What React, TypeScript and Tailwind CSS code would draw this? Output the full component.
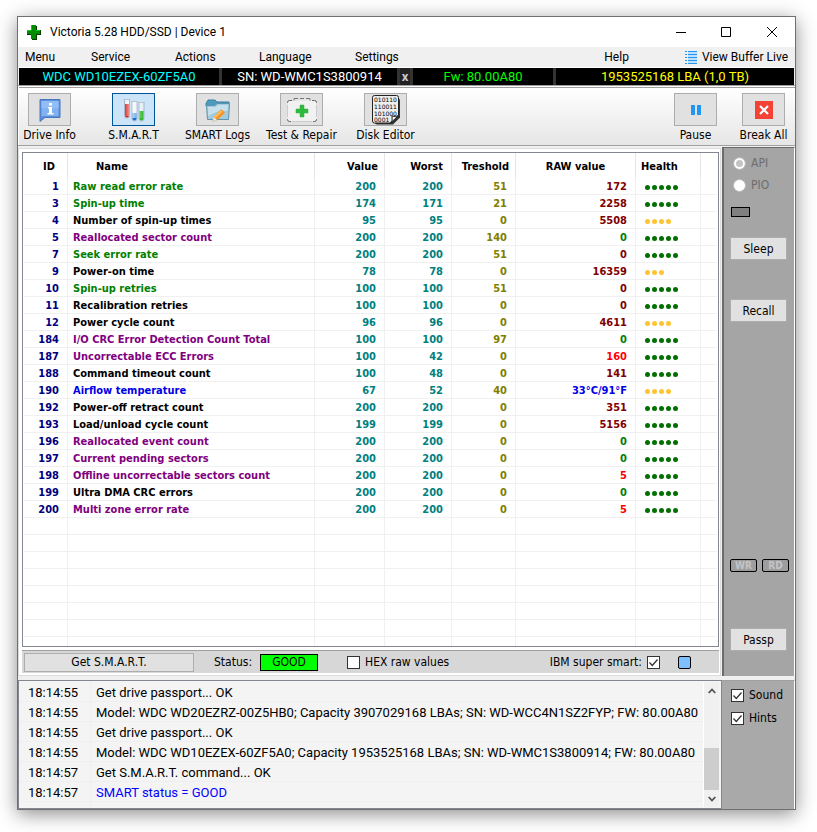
import { useState } from 'react';
import type { ReactNode } from 'react';

interface SmartAttribute {
  id: number;
  name: string;
  nameColor: string;
  value: number;
  worst: number;
  treshold: number;
  raw: string;
  rawColor: string;
  health: number;
}

interface LogEntry {
  time: string;
  message: string;
  color?: string;
}

const GREEN = 'text-[#008000]';
const BLACK = 'text-black';
const PURPLE = 'text-[#800080]';
const BLUE = 'text-[#0000e6]';
const MAROON = 'text-[#800000]';
const RED = 'text-[#ff0000]';

const row = (
  id: number,
  name: string,
  nameColor: string,
  value: number,
  worst: number,
  treshold: number,
  raw: string,
  rawColor: string,
  health: number
): SmartAttribute => ({ id, name, nameColor, value, worst, treshold, raw, rawColor, health });

const attributes: SmartAttribute[] = [
  row(1, 'Raw read error rate', GREEN, 200, 200, 51, '172', MAROON, 5),
  row(3, 'Spin-up time', GREEN, 174, 171, 21, '2258', MAROON, 5),
  row(4, 'Number of spin-up times', BLACK, 95, 95, 0, '5508', MAROON, 4),
  row(5, 'Reallocated sector count', PURPLE, 200, 200, 140, '0', GREEN, 5),
  row(7, 'Seek error rate', GREEN, 200, 200, 51, '0', MAROON, 5),
  row(9, 'Power-on time', BLACK, 78, 78, 0, '16359', MAROON, 3),
  row(10, 'Spin-up retries', GREEN, 100, 100, 51, '0', MAROON, 5),
  row(11, 'Recalibration retries', BLACK, 100, 100, 0, '0', MAROON, 5),
  row(12, 'Power cycle count', BLACK, 96, 96, 0, '4611', MAROON, 4),
  row(184, 'I/O CRC Error Detection Count Total', PURPLE, 100, 100, 97, '0', GREEN, 5),
  row(187, 'Uncorrectable ECC Errors', PURPLE, 100, 42, 0, '160', RED, 5),
  row(188, 'Command timeout count', BLACK, 100, 48, 0, '141', MAROON, 5),
  row(190, 'Airflow temperature', BLUE, 67, 52, 40, '33°C/91°F', BLUE, 4),
  row(192, 'Power-off retract count', BLACK, 200, 200, 0, '351', MAROON, 5),
  row(193, 'Load/unload cycle count', BLACK, 199, 199, 0, '5156', MAROON, 5),
  row(196, 'Reallocated event count', PURPLE, 200, 200, 0, '0', GREEN, 5),
  row(197, 'Current pending sectors', PURPLE, 200, 200, 0, '0', GREEN, 5),
  row(198, 'Offline uncorrectable sectors count', PURPLE, 200, 200, 0, '5', RED, 5),
  row(199, 'Ultra DMA CRC errors', BLACK, 200, 200, 0, '0', GREEN, 5),
  row(200, 'Multi zone error rate', PURPLE, 200, 200, 0, '5', RED, 5),
];

const logEntries: LogEntry[] = [
  { time: '18:14:55', message: 'Get drive passport... OK' },
  {
    time: '18:14:55',
    message: 'Model: WDC WD20EZRZ-00Z5HB0; Capacity 3907029168 LBAs; SN: WD-WCC4N1SZ2FYP; FW: 80.00A80',
  },
  { time: '18:14:55', message: 'Get drive passport... OK' },
  {
    time: '18:14:55',
    message: 'Model: WDC WD10EZEX-60ZF5A0; Capacity 1953525168 LBAs; SN: WD-WMC1S3800914; FW: 80.00A80',
  },
  { time: '18:14:57', message: 'Get S.M.A.R.T. command... OK' },
  { time: '18:14:57', message: 'SMART status = GOOD', color: 'text-[#0000ff]' },
];

const DriveInfoIcon = () => (
  <svg width="24" height="24" viewBox="0 0 24 24">
    <path d="M2 1.500h20v18H7L2 23.500z" fill="#5b8edb" stroke="#4a78bf" />
    <path d="M3.500 3h17v15h-17z" fill="#82b1f2" />
    <path d="M3.500 3h17v7h-17z" fill="#93bdf6" />
    <path d="M11 5h3v2.500h-3zM10 9h4v6h1.500v1.500h-6V15H11v-4.500h-1z" fill="#fff" />
  </svg>
);

const TubesIcon = () => (
  <svg width="24" height="24" viewBox="0 0 24 24">
    <defs>
      <linearGradient id="tube" x1="0" x2="1" y1="0" y2="0">
        <stop offset="0" stopColor="#fff" stopOpacity=".1" />
        <stop offset=".35" stopColor="#fff" stopOpacity=".75" />
        <stop offset="1" stopColor="#fff" stopOpacity="0" />
      </linearGradient>
    </defs>
    <path d="M2.500 1.500h5v16a2.500 2.500 0 0 1-5 0z" fill="#e6eef7" stroke="#a9b7c8" />
    <path d="M3 6h4v11.500a2 2 0 0 1-4 0z" fill="#d8231c" />
    <path d="M10 3.500h5v17a2.500 2.500 0 0 1-5 0z" fill="#e6eef7" stroke="#a9b7c8" />
    <path d="M10.500 15h4v5.500a2 2 0 0 1-4 0z" fill="#1272dd" />
    <path d="M17 4.500h5v16a2.500 2.500 0 0 1-5 0z" fill="#e6eef7" stroke="#a9b7c8" />
    <path d="M17.500 13h4v7.500a2 2 0 0 1-4 0z" fill="#35b92f" />
    <path d="M3 2h4v16H3zM10.500 4h4v16h-4zM17.500 5h4v15h-4z" fill="url(#tube)" />
    <path d="M1.500 1.500h7M9 3.500h7M16 4.500h7" stroke="#b9c4d2" />
  </svg>
);

const LogsIcon = () => (
  <svg width="26" height="24" viewBox="0 0 26 24">
    <path d="M1 5.500 3 2h7l2 2h12v4H1z" fill="#4f9bbd" stroke="#3b7f9f" />
    <path d="M1.500 7.500H10l2-2h12.500l-1 16h-21z" fill="#a4cbdd" stroke="#5b95af" />
    <path d="M3 9h8l2-2h10l-.5 6C15 12 9 14 3.200 18z" fill="#c7e1ec" />
    <path d="m16.500 11.500 3.500 3.500-8 7-3.500-3.500z" fill="#f79420" transform="rotate(-4 14 16)" />
    <path d="m16 12.500 1.300 1.300-7.300 6.500-1.200-1.200z" fill="#ffc266" />
    <path d="m8.500 18.500 3.500 3.500-4.500 1.500z" fill="#f7ead2" stroke="#b5a78d" strokeWidth=".5" />
  </svg>
);

const RepairIcon = () => (
  <svg width="32" height="26" viewBox="0 0 32 26">
    <rect x="1.500" y="3.500" width="29" height="21" rx="3" fill="#f1f1f1" />
    <path
      d="M1.500 6V5.500q0-2 2-2H6M30.500 6V5.500q0-2-2-2H26M1.500 22v.5q0 2 2 2H5M30.500 22v.5q0 2-2 2H27"
      fill="none"
      stroke="#666"
    />
    <path d="M8 3.500V1.500h4M14 1.500h4M20 1.500h4v2" fill="none" stroke="#777" />
    <path d="M6 24.500h20M1.500 8v12M30.500 8v12" stroke="#ccc" />
    <path d="M14 8h4v4h4v4h-4v4h-4v-4h-4v-4h4z" fill="#2dbb3c" stroke="#39a846" strokeWidth=".5" />
  </svg>
);

const DiskEditorIcon = () => (
  <svg width="30" height="31" viewBox="0 0 30 31">
    <path d="M4 3h22q2 0 2 2v17l-7 7H5q-2 0-2-2V5z" transform="translate(1 1.500)" fill="#333" />
    <path d="M3.500 1.500h22q2 0 2 2v18L20 29H3.500q-2 0-2-2V3.500q0-2 2-2z" fill="#ededed" stroke="#222" />
    <g fontFamily="'DejaVu Sans', sans-serif" fontSize="6" fill="#000">
      <text x="3" y="8">010110</text>
      <text x="3" y="15">110011</text>
      <text x="3" y="22">101000</text>
      <text x="3" y="28">0001</text>
    </g>
    <path d="M27.500 21.500q-3 2-6.500.5 1 5-1.500 7z" fill="#fff" stroke="#222" />
  </svg>
);

const PauseIcon = () => (
  <svg width="10" height="10" viewBox="0 0 10 10" fill="#2196f3">
    <path d="M0 0h4v10H0zM6 0h4v10H6z" />
  </svg>
);

const BreakIcon = () => (
  <svg width="18" height="18" viewBox="0 0 18 18">
    <path d="M0 0h18v18H0z" fill="#f44336" />
    <path d="m5 5 8 8M13 5l-8 8" stroke="#fff" strokeWidth="2.200" />
  </svg>
);

const ListIcon = () => (
  <svg width="12" height="13" viewBox="0 0 12 13">
    <path d="M3 0h9v13H3z" fill="#bfe0fa" />
    <path
      d="M0 .5h2M0 3.500h2M0 6.500h2M0 9.500h2M0 12.500h2M3 .5h9M3 3.500h9M3 6.500h9M3 9.500h9M3 12.500h9"
      stroke="#2196f3"
    />
  </svg>
);

interface ToolButtonProps {
  label: string;
  icon: ReactNode;
  active?: boolean;
  onClick?: () => void;
}

const ToolButton = ({ label, icon, active, onClick }: ToolButtonProps) => (
  <button onClick={onClick} className="flex w-[43px] flex-col items-center gap-px whitespace-nowrap">
    <span
      className={`flex h-[33px] w-full items-center justify-center border ${
        active ? 'border-[#005499] bg-[#cce4f7]' : 'border-[#adadad] bg-[#e1e1e1]'
      }`}
    >
      {icon}
    </span>
    <span className="leading-4">{label}</span>
  </button>
);

interface CheckBoxProps {
  id: string;
  checked: boolean;
  onChange: (checked: boolean) => void;
}

const CheckBox = ({ id, checked, onChange }: CheckBoxProps) => (
  <span className="grid shrink-0">
    <input
      id={id}
      type="checkbox"
      checked={checked}
      onChange={(e) => onChange(e.target.checked)}
      className="peer col-start-1 row-start-1 size-[13px] appearance-none border border-[#333] bg-white"
    />
    <svg
      viewBox="0 0 13 13"
      className="pointer-events-none col-start-1 row-start-1 hidden size-[13px] peer-checked:block"
    >
      <path d="m2.500 6.500 2.800 3 5.200-6" fill="none" stroke="#333" strokeWidth="1.300" />
    </svg>
  </span>
);

const SideButton = ({ label, className = '' }: { label: string; className?: string }) => (
  <button className={`h-[23px] w-[57px] border border-[#adadad] bg-[#e1e1e1] ${className}`}>{label}</button>
);

const HealthDots = ({ level }: { level: number }) => (
  <span role="img" aria-label={`Health ${level} of 5`} className="flex gap-0.5">
    {Array.from({ length: level }, (_, i) => (
      <span key={i} className={`size-[5px] rounded-full ${level === 5 ? 'bg-[#007000]' : 'bg-[#ffc433]'}`} />
    ))}
  </span>
);

const TitleBar = () => (
  <div className="flex h-[30px] items-center bg-white pl-2 font-['Roboto',sans-serif] text-[12px]">
    <svg width="15" height="15" viewBox="0 0 15 15">
      <path d="M6 1h5v4h4v5h-4v5H6v-5H1V5h5z" fill="#003c00" />
      <path d="M5 0h5v5h4v4h-4v5H5V9H1V5h4z" fill="#008c00" />
      <path d="M1 5.500h4M10 5.500h4M5.500 0v5" stroke="#00d800" />
    </svg>
    <h1 className="ml-[9px] flex-1">Victoria 5.28 HDD/SSD | Device 1</h1>
    <button aria-label="Minimize" className="flex w-[45px] justify-center">
      <svg width="10" height="10" viewBox="0 0 10 10" stroke="#000">
        <path d="M0 5.500h10" />
      </svg>
    </button>
    <button aria-label="Maximize" className="flex w-[45px] justify-center">
      <svg width="10" height="10" viewBox="0 0 10 10" fill="none" stroke="#000">
        <path d="M.5.500h9v9h-9z" />
      </svg>
    </button>
    <button aria-label="Close" className="flex w-[47px] justify-center">
      <svg width="10" height="10" viewBox="0 0 10 10" stroke="#000">
        <path d="m0 0 10 10M10 0 0 10" />
      </svg>
    </button>
  </div>
);

const MenuBar = () => (
  <nav className="flex h-5 items-center bg-[#f0f0f0] px-[7px] font-['Roboto',sans-serif] text-[12px] leading-4">
    <button className="w-[66px] text-left">Menu</button>
    <button className="w-[84px] text-left">Service</button>
    <button className="w-[84px] text-left">Actions</button>
    <button className="w-[96px] text-left">Language</button>
    <button className="text-left">Settings</button>
    <button className="mr-14 ml-auto">Help</button>
    <button className="flex items-center gap-[5px] whitespace-nowrap">
      <ListIcon />
      View Buffer Live
    </button>
  </nav>
);

const DriveBar = () => (
  <div className="mx-px grid h-[17px] grid-cols-[200fr_175fr_10px_140fr_238fr] gap-[3px] bg-[#333] text-center font-['Roboto',sans-serif] text-[13px] leading-[17px] whitespace-nowrap">
    <span className="bg-black text-[#00ffff]">WDC WD10EZEX-60ZF5A0</span>
    <span className="bg-black text-white">SN: WD-WMC1S3800914</span>
    <button aria-label="Clear serial number" className="bg-[#222] font-bold text-[#c8c8d8]">
      x
    </button>
    <span className="bg-black text-[#00ff00]">Fw: 80.00A80</span>
    <span className="bg-black text-[#ffff00]">1953525168 LBA (1,0 TB)</span>
  </div>
);

const SmartTable = () => {
  const head = 'border-r border-[#e5e5e5] p-0 pt-0.5 font-bold';
  const cell = 'border-r border-b border-[#f0f0f0] p-0 pt-0.5';

  return (
    <div className="border border-[#828790] bg-white px-px">
      <table className="w-full table-fixed border-separate border-spacing-0 text-[11px] leading-[14px] font-bold">
        <colgroup>
          <col className="w-[44px]" />
          <col />
          <col className="w-[70px]" />
          <col className="w-[67px]" />
          <col className="w-[64px]" />
          <col className="w-[120px]" />
          <col className="w-[65px]" />
          <col className="w-[16px]" />
        </colgroup>
        <thead>
          <tr className="h-[25px]">
            <th className={`${head} pr-3 text-right`}>ID</th>
            <th className={`${head} pl-7 text-left`}>Name</th>
            <th className={`${head} pr-1.5 text-right`}>Value</th>
            <th className={`${head} pr-2 text-right`}>Worst</th>
            <th className={`${head} pr-1.5 text-right`}>Treshold</th>
            <th className={`${head} text-center`}>RAW value</th>
            <th className={`${head} pl-[5px] text-left`}>Health</th>
            <td />
          </tr>
        </thead>
        <tbody>
          {attributes.map((attr) => (
            <tr key={attr.id} className="h-[17px]">
              <td className={`${cell} pr-2 text-right text-[#000080]`}>{attr.id}</td>
              <td className={`${cell} pl-[5px] whitespace-nowrap ${attr.nameColor}`}>{attr.name}</td>
              <td className={`${cell} pr-2 text-right text-[#008080]`}>{attr.value}</td>
              <td className={`${cell} pr-2 text-right text-[#008080]`}>{attr.worst}</td>
              <td className={`${cell} pr-2 text-right text-[#808000]`}>{attr.treshold}</td>
              <td className={`${cell} pr-2 text-right ${attr.rawColor}`}>{attr.raw}</td>
              <td className={`${cell} pl-[9px]`}>
                <HealthDots level={attr.health} />
              </td>
              <td className="border-b border-[#f0f0f0]" />
            </tr>
          ))}
          {/* empty grid lines below the data */}
          {Array.from({ length: 7 }, (_, i) => (
            <tr key={`empty-${i}`} className="h-[17px]">
              {Array.from({ length: 7 }, (_, c) => (
                <td key={c} className={cell} />
              ))}
              <td className="border-b border-[#f0f0f0]" />
            </tr>
          ))}
          <tr className="h-[9px]">
            {Array.from({ length: 7 }, (_, c) => (
              <td key={c} className="border-r border-[#f0f0f0] p-0" />
            ))}
            <td />
          </tr>
        </tbody>
      </table>
    </div>
  );
};

const StatusBar = () => {
  const [hex, setHex] = useState(false);
  const [superSmart, setSuperSmart] = useState(true);

  return (
    <div className="mt-[3px] flex h-[23px] items-center border-t border-[#a0a0a0] bg-[#d7d7d7] pl-0.5">
      <button className="h-[19px] w-[170px] border border-[#adadad] bg-[#e1e1e1] leading-4">Get S.M.A.R.T.</button>
      <span className="ml-5">Status:</span>
      <output className="ml-2 h-[17px] w-[58px] border border-black bg-[#00ff00] text-center leading-[15px]">
        GOOD
      </output>
      <div className="ml-[29px] flex items-center gap-[5px]">
        <CheckBox id="hex" checked={hex} onChange={setHex} />
        <label htmlFor="hex">HEX raw values</label>
      </div>
      <div className="ml-auto flex items-center gap-[5px]">
        <label htmlFor="super-smart">IBM super smart:</label>
        <CheckBox id="super-smart" checked={superSmart} onChange={setSuperSmart} />
      </div>
      <button
        aria-label="Grid color"
        className="mr-7 ml-[18px] size-[13px] rounded-xs border border-black bg-[#80bfff]"
      />
    </div>
  );
};

const SidePanel = () => {
  const [mode, setMode] = useState('API');

  return (
    <aside className="mt-px flex w-[73px] flex-col border-t border-r border-l-2 border-[#6b6b6b] border-r-white bg-[#a5a5a5] pl-[6px]">
      <div className="mt-[7px] flex flex-col gap-1.5 pl-[3px] text-[#6d6d6d]">
        {['API', 'PIO'].map((name) => (
          <label key={name} className="flex items-center gap-[5px] leading-4">
            <input
              type="radio"
              name="mode"
              value={name}
              checked={mode === name}
              onChange={() => setMode(name)}
              className="size-[13px] appearance-none rounded-full border border-[#bcbcbc] bg-white checked:bg-[#c4c4c4] checked:shadow-[inset_0_0_0_2px_white]"
            />
            {name}
          </label>
        ))}
      </div>
      <div className="mt-[14px] ml-px h-[10px] w-[19px] border border-black bg-[#808080]" />
      <SideButton label="Sleep" className="mt-5" />
      <SideButton label="Recall" className="mt-[39px]" />
      <div className="mt-auto mb-14 flex gap-[5px] text-center text-[10px] leading-[11px] font-bold text-[#c4c4c4]">
        <span className="w-[27px] rounded-xs border border-black bg-[#9d9da0]">WR</span>
        <span className="w-[27px] rounded-xs border border-black bg-[#9d9da0]">RD</span>
      </div>
      <SideButton label="Passp" className="mb-[25px]" />
    </aside>
  );
};

const LogPanel = () => (
  <div className="flex h-[129px] min-w-0 flex-1 border border-[#828790] bg-[#f4f4f4] py-px">
    <table className="h-full min-w-0 flex-1 border-separate border-spacing-0 self-start font-['Roboto',sans-serif] text-[13px] leading-4">
      <tbody>
        {logEntries.map((entry, i) => (
          <tr key={i} className="h-5">
            <td className="w-[72px] border-r border-b border-[#efefef] p-0 pt-0.5 pl-[9px]">{entry.time}</td>
            <td
              className={`border-b border-[#efefef] p-0 pt-0.5 pl-[5px] whitespace-nowrap ${entry.color || 'text-black'}`}
            >
              {entry.message}
            </td>
          </tr>
        ))}
        <tr>
          <td className="border-r border-[#efefef] p-0" />
          <td />
        </tr>
      </tbody>
    </table>
    <div className="mr-0.5 flex w-[16px] shrink-0 flex-col border-l border-white bg-[#f0f0f0]">
      <button aria-label="Scroll up" className="flex h-[17px] items-center justify-center">
        <svg width="8" height="6" viewBox="0 0 8 6">
          <path d="m.7 5 3.300-3.500L7.300 5" fill="none" stroke="#505050" strokeWidth="1.800" />
        </svg>
      </button>
      <div className="mt-auto h-[42px] bg-[#cdcdcd]" />
      <button aria-label="Scroll down" className="flex h-[17px] items-center justify-center">
        <svg width="8" height="6" viewBox="0 0 8 6">
          <path d="m.7 1 3.300 3.500L7.300 1" fill="none" stroke="#505050" strokeWidth="1.800" />
        </svg>
      </button>
    </div>
  </div>
);

const OptionsPanel = () => {
  const [sound, setSound] = useState(true);
  const [hints, setHints] = useState(true);

  return (
    <div className="flex w-[73px] flex-col gap-[7px] border-t border-r border-t-[#a0a0a0] border-r-white bg-[#a9a9a9] pt-1.5 pl-[9px] leading-4">
      <div className="flex items-center gap-[5px]">
        <CheckBox id="sound" checked={sound} onChange={setSound} />
        <label htmlFor="sound">Sound</label>
      </div>
      <div className="flex items-center gap-[5px]">
        <CheckBox id="hints" checked={hints} onChange={setHints} />
        <label htmlFor="hints">Hints</label>
      </div>
    </div>
  );
};

export default function App() {
  const [tab, setTab] = useState('S.M.A.R.T');

  const tools = [
    { label: 'Drive Info', icon: <DriveInfoIcon /> },
    { label: 'S.M.A.R.T', icon: <TubesIcon /> },
    { label: 'SMART Logs', icon: <LogsIcon /> },
    { label: 'Test & Repair', icon: <RepairIcon /> },
    { label: 'Disk Editor', icon: <DiskEditorIcon /> },
  ];

  return (
    <div className="bg-white pt-4 pr-[21px] pb-[22px] pl-[17px] font-['DejaVu_Sans_Condensed','DejaVu_Sans',sans-serif] text-[12px] leading-4 text-black">
      <main className="border border-[#707070] bg-[#f0f0f0] shadow-[0_4px_18px_rgba(0,0,0,0.45)]">
        <TitleBar />
        <MenuBar />
        <div className="border-t border-white">
          <DriveBar />
        </div>

        <div className="border-t border-b border-[#a0a0a0] bg-white pt-px pl-px">
          <div className="flex h-[58px] gap-[41px] border-t border-[#a0a0a0] bg-linear-to-b from-white to-[#e6e6e6] pt-[5px] pr-[10px] pl-[9px]">
            {tools.map((tool) => (
              <ToolButton
                key={tool.label}
                label={tool.label}
                icon={tool.icon}
                active={tab === tool.label}
                onClick={() => setTab(tool.label)}
              />
            ))}
            <div className="ml-auto flex gap-[25px]">
              <ToolButton label="Pause" icon={<PauseIcon />} />
              <ToolButton label="Break All" icon={<BreakIcon />} />
            </div>
          </div>
        </div>

        <div className="flex justify-between gap-px">
          <div className="mt-[2px] min-w-0 flex-1 border border-[#dcdcdc] bg-white pt-[3px] pr-px pb-0.5 pl-[3px]">
            <SmartTable />
            <StatusBar />
          </div>
          <SidePanel />
        </div>

        <div className="mt-1 flex">
          <LogPanel />
          <OptionsPanel />
        </div>
      </main>
    </div>
  );
}
